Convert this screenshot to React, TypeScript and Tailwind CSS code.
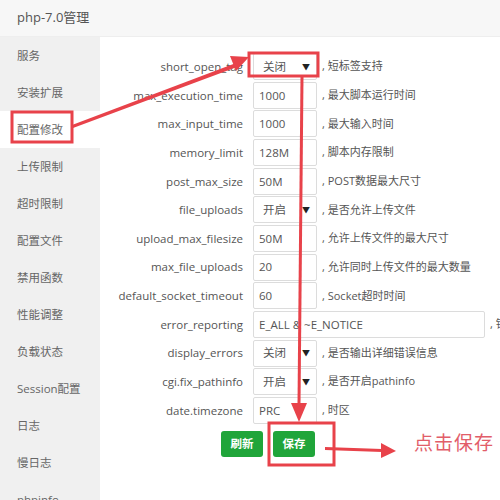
const menu = [
  "服务",
  "安装扩展",
  "配置修改",
  "上传限制",
  "超时限制",
  "配置文件",
  "禁用函数",
  "性能调整",
  "负载状态",
  "Session配置",
  "日志",
  "慢日志",
  "phpinfo",
];

type Row = {
  name: string;
  value: string;
  note: string;
  select?: boolean;
  wide?: boolean;
};

const rows: Row[] = [
  { name: "short_open_tag", value: "关闭", note: "短标签支持", select: true },
  { name: "max_execution_time", value: "1000", note: "最大脚本运行时间" },
  { name: "max_input_time", value: "1000", note: "最大输入时间" },
  { name: "memory_limit", value: "128M", note: "脚本内存限制" },
  { name: "post_max_size", value: "50M", note: "POST数据最大尺寸" },
  { name: "file_uploads", value: "开启", note: "是否允许上传文件", select: true },
  { name: "upload_max_filesize", value: "50M", note: "允许上传文件的最大尺寸" },
  { name: "max_file_uploads", value: "20", note: "允许同时上传文件的最大数量" },
  { name: "default_socket_timeout", value: "60", note: "Socket超时时间" },
  { name: "error_reporting", value: "E_ALL & ~E_NOTICE", note: "错误级别", wide: true },
  { name: "display_errors", value: "关闭", note: "是否输出详细错误信息", select: true },
  { name: "cgi.fix_pathinfo", value: "开启", note: "是否开启pathinfo", select: true },
  { name: "date.timezone", value: "PRC", note: "时区" },
];

const Field = ({ row }: { row: Row }) => {
  if (row.select) {
    return (
      <div className="w-[64px] h-[27px] shrink-0 border border-[#dcdcdc] rounded-[2px] bg-white flex items-center justify-between pl-[9px] pr-[6px] text-[11.5px] text-[#555]">
        <span>{row.value}</span>
        <span className="text-[8px] text-[#222]">▼</span>
      </div>
    );
  }
  return (
    <div
      className={`${
        row.wide ? "w-[232px]" : "w-[64px]"
      } h-[27px] shrink-0 border border-[#dcdcdc] rounded-[2px] bg-white flex items-center pl-[5px] text-[11.5px] text-[#555] whitespace-pre`}
    >
      {row.value}
    </div>
  );
};

const Arrows = () => (
  <svg
    className="absolute inset-0 pointer-events-none"
    width="500"
    height="500"
    viewBox="0 0 500 500"
  >
    <g fill="none" stroke="#e8424a" strokeWidth="3">
      <rect x="12" y="112" width="60" height="30" />
      <rect x="249" y="53" width="69" height="23" />
      <rect x="269" y="423" width="65" height="42" />
    </g>
    <g fill="#e8424a" stroke="none">
      {/* left arrow: menu -> select */}
      <polygon points="72,125 236,63 237,67 73,128" />
      <polygon points="230,56 249,57 236,71" />
      {/* down arrow: select -> save */}
      <polygon points="300.5,76 303.5,76 300.5,404 297.5,404" />
      <polygon points="291,403 307,403 299,422" />
      {/* right arrow: save -> tip */}
      <polygon points="325,447 382,449 382,452 325,450" />
      <polygon points="381,443 396,451 381,458" />
    </g>
  </svg>
);

export default function App() {
  return (
    <div
      className="relative w-[500px] h-[500px] overflow-hidden bg-white"
      style={{ fontFamily: '"Open Sans", "Noto Sans CJK SC", sans-serif' }}
    >
      <div className="h-[37px] bg-[#f7f7f7] border-b border-[#eeeeee] flex items-center pl-[17px] text-[13px] text-[#555]">
        php-7.0管理
      </div>
      <div className="flex h-[463px]">
        <div className="w-[100px] shrink-0 bg-[#f0f0f0]">
          {menu.map((m, i) => (
            <div
              key={m}
              className={`h-[37px] flex items-center pl-[17px] text-[11.5px] text-[#666] ${
                i === 2 ? "bg-white" : ""
              }`}
            >
              {m}
            </div>
          ))}
        </div>
        <div className="flex-1 pt-[16px] overflow-hidden">
          <div className="flex flex-col gap-[1.67px]">
            {rows.map((r) => (
              <div key={r.name} className="flex items-center h-[27px] whitespace-nowrap">
                <div className="w-[143px] shrink-0 text-right text-[11.5px] text-[#555]">
                  {r.name}
                </div>
                <div className="w-[10px] shrink-0" />
                <Field row={r} />
                <div className="ml-[5px] text-[11px] text-[#555]">, {r.note}</div>
              </div>
            ))}
          </div>
          <div className="flex gap-[10px] pl-[121px] mt-[7px]">
            <button className="w-[42px] h-[26px] rounded-[3px] bg-[#20a53a] text-white text-[11.5px] font-bold">
              刷新
            </button>
            <button className="w-[42px] h-[26px] rounded-[3px] bg-[#20a53a] text-white text-[11.5px] font-bold">
              保存
            </button>
          </div>
        </div>
      </div>
      <div
        className="absolute left-[414px] top-[428px] text-[19px] text-[#e25d69] tracking-[1px]"
        style={{ fontFamily: '"Noto Sans CJK SC", serif' }}
      >
        点击保存
      </div>
      <Arrows />
    </div>
  );
}
